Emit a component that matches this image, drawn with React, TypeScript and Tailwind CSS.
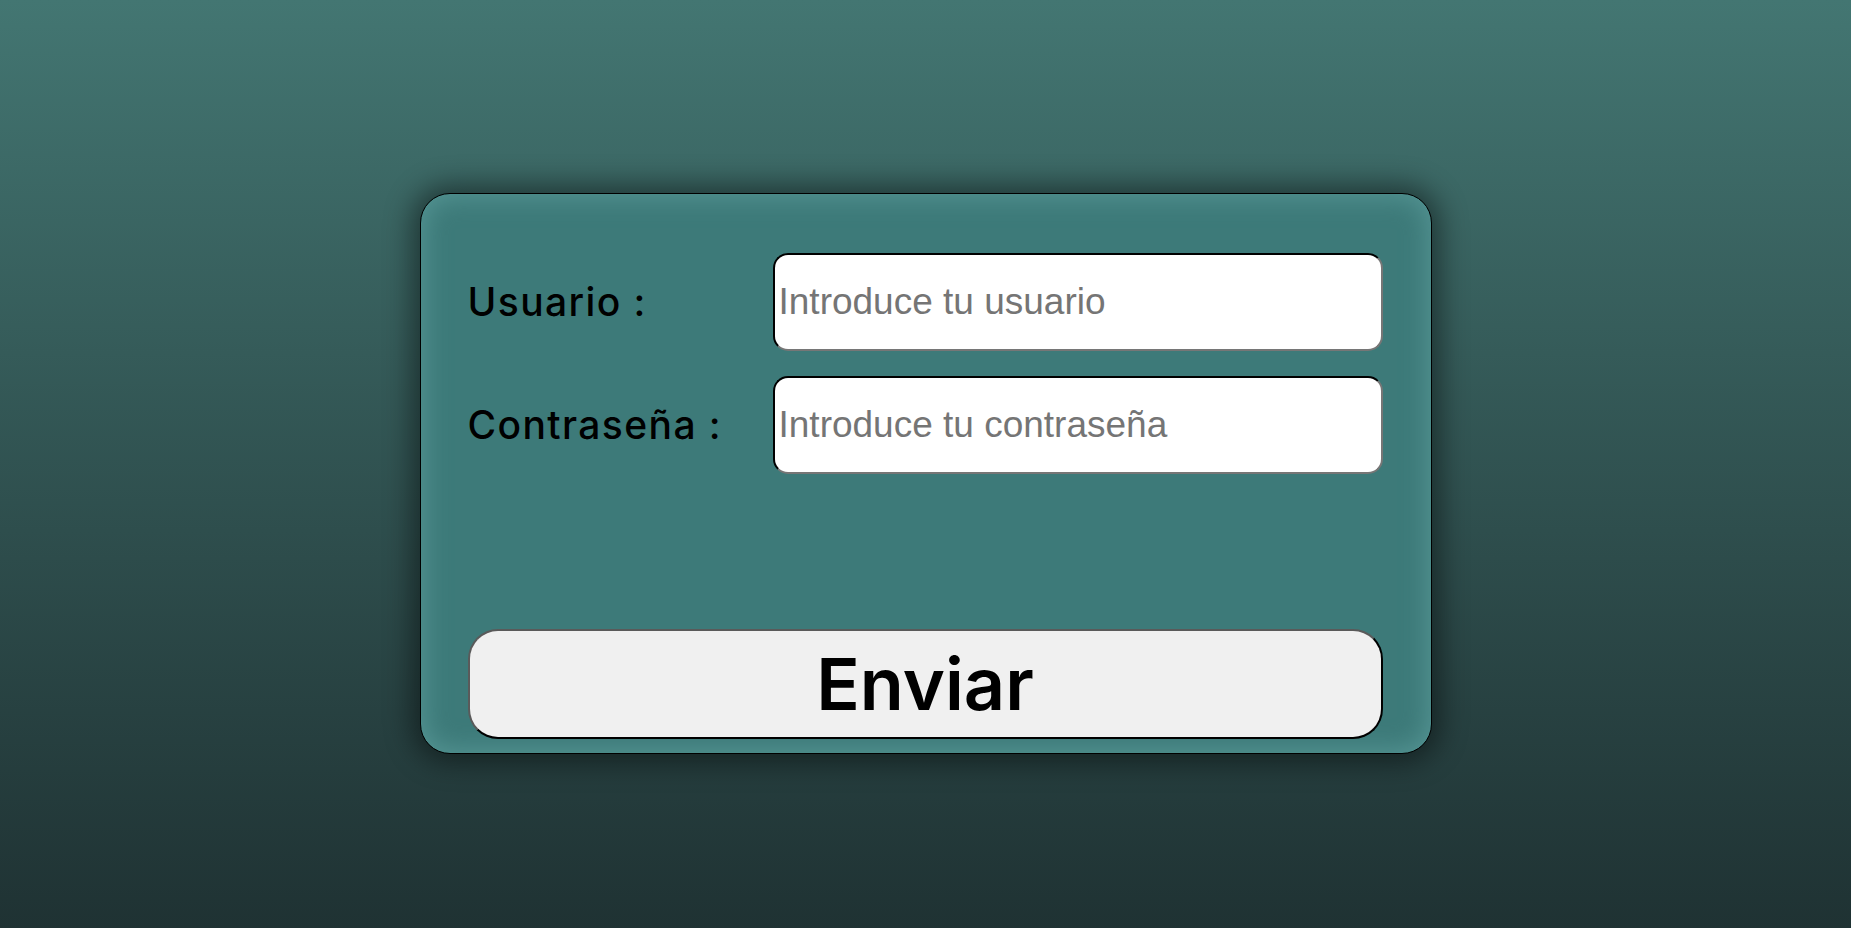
export default function App() {
  return (
    <div className="flex min-h-screen justify-center bg-gradient-to-b from-[#437672] to-[#1f3233] pt-[193px] font-['Inter','Liberation_Sans',sans-serif]">
      <form
        className="flex h-[561px] w-[1012px] flex-col rounded-[30px] border border-black bg-[#3d7a79] px-[47px] pb-[14px] pt-[59px] shadow-[0_0_28px_8px_rgba(0,0,0,0.45),inset_0_0_26px_3px_#559594]"
        onSubmit={(e) => e.preventDefault()}
      >
        <div className="flex items-center">
          <label className="w-[305px] text-[39px] font-medium tracking-[1.4px] text-black">Usuario :</label>
          <input
            type="text"
            placeholder="Introduce tu usuario"
            className="h-[98px] w-[610px] rounded-[15px] border-2 border-b-[#767676] border-l-black border-r-[#767676] border-t-black bg-white px-[4px] font-['Liberation_Sans',Arial,sans-serif] text-[37px] text-black outline-none placeholder:text-[#757575]"
          />
        </div>
        <div className="mt-[25px] flex items-center">
          <label className="w-[305px] text-[39px] font-medium tracking-[1.4px] text-black">Contraseña :</label>
          <input
            type="password"
            placeholder="Introduce tu contraseña"
            className="h-[98px] w-[610px] rounded-[15px] border-2 border-b-[#767676] border-l-black border-r-[#767676] border-t-black bg-white px-[4px] font-['Liberation_Sans',Arial,sans-serif] text-[37px] text-black outline-none placeholder:text-[#757575]"
          />
        </div>
        <button
          type="submit"
          className="mt-auto h-[110px] w-[915px] rounded-[30px] border-2 border-b-black border-l-[#5a5a5a] border-r-black border-t-[#5a5a5a] bg-[#f0f0f0] text-[72px] font-semibold leading-none text-black"
        >
          Enviar
        </button>
      </form>
    </div>
  );
}
